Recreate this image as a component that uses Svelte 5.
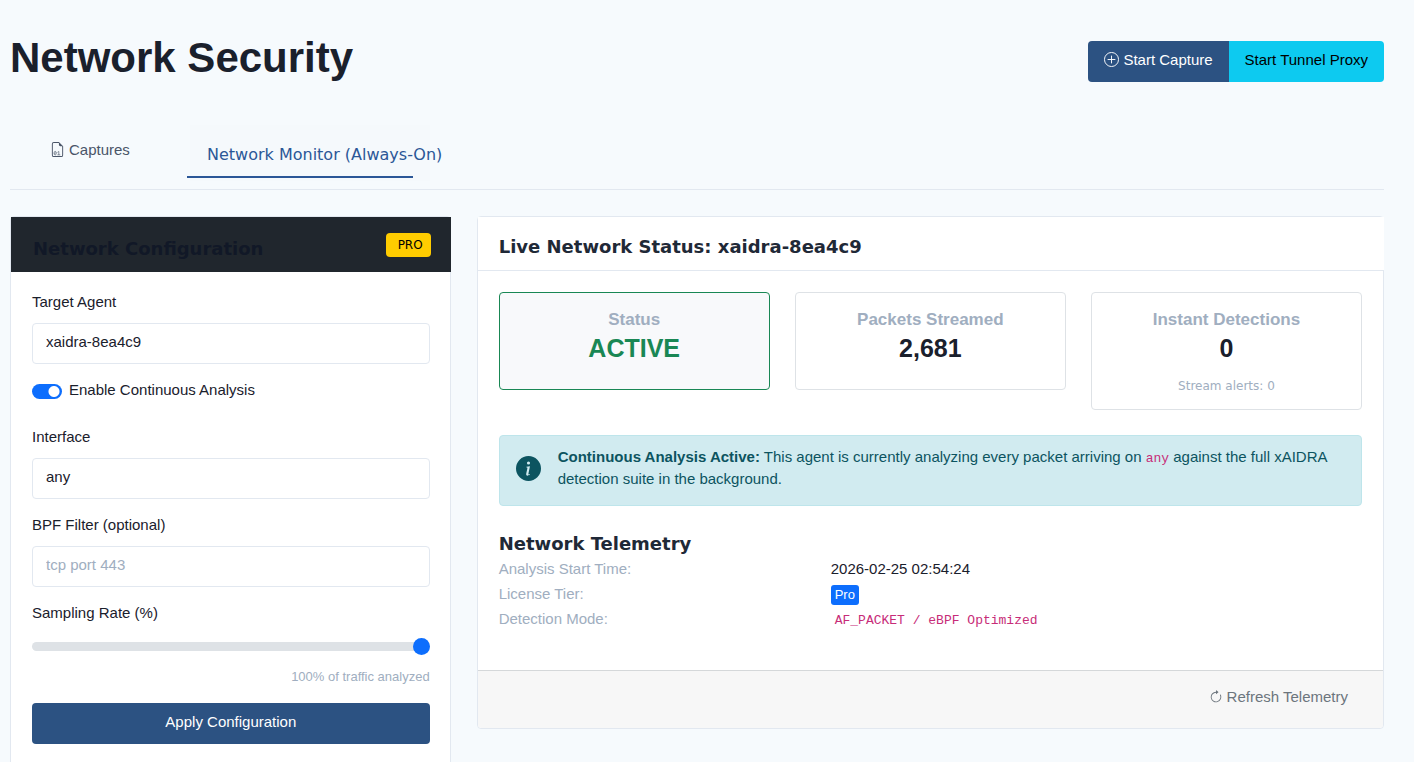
<script>
	let agent = 'xaidra-8ea4c9';
	let iface = 'any';
	let filter = '';
	let continuous = true;
	let rate = 100;

	const stats = [
		{ label: 'Status', value: 'ACTIVE', active: true },
		{ label: 'Packets Streamed', value: '2,681' },
		{ label: 'Instant Detections', value: '0', note: 'Stream alerts: 0' },
	];
</script>

<div class="page">
	<header class="page-header">
		<h1>Network Security</h1>
		<div class="btn-group">
			<button class="btn primary" type="button">
				<svg width="15" height="15" viewBox="0 0 16 16" fill="none" stroke="currentColor" aria-hidden="true">
					<circle cx="8" cy="8" r="7.5" />
					<path d="M8 4.3v7.4M4.3 8h7.4" stroke-linecap="round" />
				</svg>
				Start Capture
			</button>
			<button class="btn info" type="button">Start Tunnel Proxy</button>
		</div>
	</header>

	<nav class="tabs">
		<a class="tab" href="#captures">
			<svg width="15" height="15" viewBox="0 0 16 16" fill="currentColor" aria-hidden="true">
				<path d="M14 14V4.5L9.5 0H4a2 2 0 0 0-2 2v12a2 2 0 0 0 2 2h8a2 2 0 0 0 2-2zM9.5 3A1.5 1.5 0 0 0 11 4.5h2V14a1 1 0 0 1-1 1H4a1 1 0 0 1-1-1V2a1 1 0 0 1 1-1h5.5v2z" />
				<ellipse cx="5.5" cy="11.9" rx="1.2" ry="1.9" fill="none" stroke="currentColor" stroke-width=".7" />
				<path d="M4.8 12.7l1.5-1.5M8 11l1.4-.9v3.6M7.9 13.7h3" fill="none" stroke="currentColor" stroke-width=".7" />
			</svg>
			Captures
		</a>
		<a class="tab current" href="#monitor" aria-current="page">Network Monitor (Always-On)</a>
	</nav>

	<main class="columns">
		<section class="card config">
			<div class="config-header">
				<h2>Network Configuration</h2>
				<span class="pro">PRO</span>
			</div>
			<form class="config-body" on:submit|preventDefault>
				<div class="field">
					<label for="agent">Target Agent</label>
					<input id="agent" class="text-input" type="text" bind:value={agent}>
				</div>
				<div class="switch">
					<input id="continuous" type="checkbox" role="switch" bind:checked={continuous}>
					<label for="continuous">Enable Continuous Analysis</label>
				</div>
				<div class="field">
					<label for="iface">Interface</label>
					<input id="iface" class="text-input" type="text" bind:value={iface}>
				</div>
				<div class="field">
					<label for="filter">BPF Filter (optional)</label>
					<input id="filter" class="text-input" type="text" placeholder="tcp port 443" bind:value={filter}>
				</div>
				<div class="rate">
					<label for="rate">Sampling Rate (%)</label>
					<input id="rate" type="range" min="1" max="100" bind:value={rate}>
					<div class="rate-note">{rate}% of traffic analyzed</div>
				</div>
				<button class="btn primary apply" type="submit">Apply Configuration</button>
			</form>
		</section>

		<section class="card live">
			<div class="live-header">
				<h2>Live Network Status: {agent}</h2>
			</div>
			<div class="live-body">
				<div class="stats">
					{#each stats as stat}
						<div class="stat" class:active={stat.active}>
							<div class="stat-label">{stat.label}</div>
							<div class="stat-value">{stat.value}</div>
							{#if stat.note}
								<div class="stat-note">{stat.note}</div>
							{/if}
						</div>
					{/each}
				</div>

				<div class="alert">
					<svg width="25" height="25" viewBox="0 0 16 16" fill="currentColor" aria-hidden="true">
						<path d="M8 16A8 8 0 1 0 8 0a8 8 0 0 0 0 16zm.93-9.412-1 4.705c-.07.34.029.533.304.533.194 0 .487-.07.686-.246l-.088.416c-.287.346-.92.598-1.465.598-.703 0-1.002-.422-.808-1.319l.738-3.468c.064-.293.006-.399-.287-.47l-.451-.081.082-.381 2.29-.287zM8 5.5a1 1 0 1 1 0-2 1 1 0 0 1 0 2z" />
					</svg>
					<p>
						<strong>Continuous Analysis Active:</strong> This agent is currently analyzing every packet
						arriving on <code>{iface}</code> against the full xAIDRA detection suite in the background.
					</p>
				</div>

				<h2>Network Telemetry</h2>
				<dl class="telemetry">
					<dt>Analysis Start Time:</dt>
					<dd>2026-02-25 02:54:24</dd>
					<dt>License Tier:</dt>
					<dd><span class="tier">Pro</span></dd>
					<dt>Detection Mode:</dt>
					<dd class="mode"><code>AF_PACKET / eBPF Optimized</code></dd>
				</dl>
			</div>
			<div class="live-footer">
				<button class="refresh" type="button">
					<svg width="14" height="14" viewBox="0 0 16 16" fill="currentColor" aria-hidden="true">
						<path fill-rule="evenodd" d="M8 3a5 5 0 1 0 4.546 2.914.5.5 0 0 1 .908-.417A6 6 0 1 1 8 2v1z" />
						<path d="M8 4.466V.534a.25.25 0 0 1 .41-.192l2.36 1.966c.12.1.12.284 0 .384L8.41 4.658A.25.25 0 0 1 8 4.466z" />
					</svg>
					Refresh Telemetry
				</button>
			</div>
		</section>
	</main>
</div>

<style>
	:global(body) {
		background: #f6fafd;
	}

	.page {
		padding: 36px 30px 0 10px;
		font: 15px/20px "Liberation Sans", Arial, sans-serif;
		color: #1a202c;
	}

	h1, h2, p, dl, dd {
		margin: 0;
	}

	h1 {
		padding-bottom: 6px;
		font-size: 42px;
		line-height: 44px;
	}

	h2 {
		font: bold 18px/24px "DejaVu Sans", sans-serif;
		color: #1f2937;
	}

	button, input {
		font: inherit;
		color: inherit;
		margin: 0;
		box-sizing: border-box;
	}

	code {
		font: 13px "Liberation Mono", monospace;
		color: #c72c78;
	}

	.page-header {
		display: flex;
		align-items: center;
		justify-content: space-between;
		margin-bottom: 45px;
	}

	.btn-group {
		display: flex;
		border-radius: 4px;
		overflow: hidden;
	}

	.btn {
		display: flex;
		align-items: center;
		justify-content: center;
		gap: 4px;
		padding: 9px 16px 12px;
		border: 0;
	}

	.primary {
		background: #2c5282;
		color: #fff;
	}

	.info {
		background: #0dcaf0;
		color: #000;
	}

	.tabs {
		display: flex;
		padding-bottom: 11px;
		border-bottom: 1px solid #e2e8f0;
		margin-bottom: 26px;
	}

	.tab {
		display: flex;
		gap: 4px;
		width: 177px;
		box-sizing: border-box;
		padding: 9px 0 0 40px;
		color: #4a5568;
		text-decoration: none;
	}

	.tab svg {
		margin-top: 2px;
	}

	.tab.current {
		position: relative;
		width: 226px;
		padding: 13px 0 10px 20px;
		border-bottom: 2px solid #2b5797;
		font: 16px/22px "DejaVu Sans", sans-serif;
		white-space: nowrap;
		color: #2b5797;
	}

	.tab.current::before {
		content: "";
		position: absolute;
		inset: -6px -17px -5px 3px;
		background: #f5f9fc;
		z-index: -1;
	}

	.columns {
		display: grid;
		grid-template-columns: repeat(12, minmax(0, 1fr));
		column-gap: 26px;
		align-items: start;
	}

	.card {
		background: #fff;
		border: 1px solid #e2e8f0;
		border-radius: 4px;
	}

	.config {
		grid-column: span 4;
	}

	.live {
		grid-column: span 8;
	}

	.config-header {
		display: flex;
		align-items: flex-start;
		justify-content: space-between;
		padding: 16px 20px 11px 22px;
		margin-right: -1px;
		background: #20262d;
	}

	.config-header h2 {
		padding-top: 4px;
		color: #111827;
	}

	.pro {
		padding: 0 8px 0 12px;
		border-radius: 4px;
		background: #fc0;
		font: 12px/24px "DejaVu Sans", sans-serif;
		color: #000;
	}

	.config-body {
		padding: 20px 20px 21px 21px;
	}

	.field {
		margin-bottom: 16px;
	}

	.config-body label {
		display: block;
	}

	.text-input {
		display: block;
		width: 100%;
		margin-top: 11px;
		padding: 8px 13px 11px;
		border: 1px solid #e2e8f0;
		border-radius: 4px;
		background: #fff;
	}

	.text-input::placeholder {
		color: #a0aec0;
		opacity: 1;
	}

	.switch {
		display: flex;
		align-items: center;
		gap: 7px;
		margin-bottom: 27px;
	}

	.switch input {
		appearance: none;
		width: 30px;
		height: 15px;
		margin-top: 2px;
		border-radius: 8px;
		background: #adb5bd radial-gradient(circle at 8px 50%, #fff 5px, transparent 6px);
	}

	.switch input:checked {
		background: #0d6efd radial-gradient(circle at 22px 50%, #fff 5px, transparent 6px);
	}

	.rate input {
		appearance: none;
		display: block;
		width: 100%;
		height: 25px;
		margin-top: 11px;
		background: transparent;
	}

	.rate input::-webkit-slider-runnable-track {
		height: 9px;
		border-radius: 5px;
		background: #dee2e6;
	}

	.rate input::-webkit-slider-thumb {
		appearance: none;
		width: 17px;
		height: 17px;
		margin-top: -4px;
		border-radius: 50%;
		background: #0d6efd;
	}

	.rate-note {
		margin: 8px 0 16px;
		font-size: 13px;
		text-align: right;
		color: #a0aec0;
	}

	.apply {
		width: 100%;
		border-radius: 4px;
	}

	.live-header {
		margin-right: -1px;
		padding: 18px 21px 11px;
		border-bottom: 1px solid #e2e8f0;
		background: #fff;
	}

	.live-body {
		padding: 21px 21px 39px;
	}

	.stats {
		display: grid;
		grid-template-columns: repeat(3, 1fr);
		gap: 25px;
		align-items: start;
		text-align: center;
	}

	.stat {
		padding: 17px 16px 13px;
		border: 1px solid #dee2e6;
		border-radius: 4px;
	}

	.stat.active {
		border-color: #198754;
		background: #f8f9fb;
	}

	.stat-label {
		font-size: 17px;
		font-weight: bold;
		color: #a0aec0;
	}

	.stat-value {
		margin: 4px 0 14px;
		font-size: 25px;
		line-height: 28px;
		font-weight: bold;
	}

	.active .stat-value {
		color: #198754;
	}

	.stat-note {
		font: 12px/20px "DejaVu Sans", sans-serif;
		color: #a0aec0;
	}

	.alert {
		display: flex;
		gap: 17px;
		margin: 25px 0;
		padding: 10px 16px 15px;
		border: 1px solid #bee5eb;
		border-radius: 4px;
		background: #d1ebf0;
		line-height: 22px;
		color: #0c5460;
	}

	.alert svg {
		flex: none;
		align-self: center;
		margin-top: 1px;
	}

	.live-body h2 {
		padding-top: 1px;
	}

	.telemetry {
		display: grid;
		grid-template-columns: 5fr 8fr;
		line-height: 25px;
	}

	.telemetry dt {
		color: #a0aec0;
	}

	.tier {
		display: inline-block;
		padding: 0 4px;
		border-radius: 3px;
		background: #0d6efd;
		font-size: 13px;
		line-height: 20px;
		color: #fff;
	}

	.mode {
		padding-left: 4px;
	}

	.live-footer {
		display: flex;
		justify-content: flex-end;
		padding: 16px 35px 21px;
		border-top: 1px solid #d5d8da;
		border-radius: 0 0 4px 4px;
		background: #f7f7f7;
	}

	.refresh {
		display: flex;
		align-items: center;
		gap: 4px;
		padding: 0;
		border: 0;
		background: none;
		color: #6c757d;
	}
</style>
